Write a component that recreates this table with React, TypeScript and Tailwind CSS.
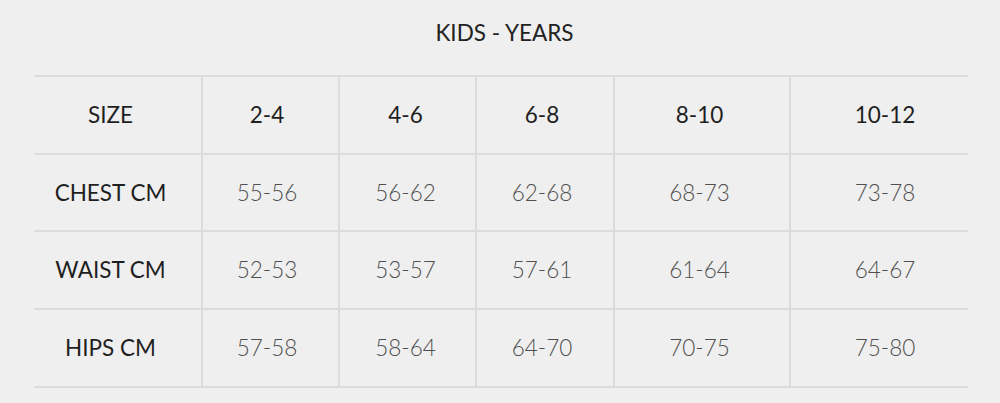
const headers = ["2-4", "4-6", "6-8", "8-10", "10-12"];

const rows = [
    { label: "CHEST CM", values: ["55-56", "56-62", "62-68", "68-73", "73-78"], h: "h-[77px]" },
    { label: "WAIST CM", values: ["52-53", "53-57", "57-61", "61-64", "64-67"], h: "h-[78px]" },
    { label: "HIPS CM", values: ["57-58", "58-64", "64-70", "70-75", "75-80"], h: "h-[78px]" },
];

const cols = "grid grid-cols-[167px_137px_137px_138px_176px_179px]";

// the source table centers its text a few px off per column
const nudge = ["pr-[7px]", "pr-[4px]", "pr-[6px]", "pr-[5px]", "pl-[11px]"];

const App = () => {
    return (
        <div
            className="w-[1000px] h-[403px] bg-[#efefef] pl-[34px]"
            style={{ fontFamily: "Lato, 'Liberation Sans', sans-serif" }}
        >
            <div className="w-[934px]">
                <div className="h-[75px] flex items-center justify-center pb-[10px] pl-[7px] text-[22.5px] text-[#222]">
                    KIDS - YEARS
                </div>
                <div className="border-t-2 border-[#dcdcdc]">
                    <div className={`${cols} h-[78px] border-b-2 border-[#dcdcdc] text-[22.5px] text-[#1f1f1f]`}>
                        <div className="flex items-center justify-center pr-[14px]">SIZE</div>
                        {headers.map((h, i) => (
                            <div key={h} className={`flex items-center justify-center border-l-2 border-[#dcdcdc] ${nudge[i]}`}>
                                {h}
                            </div>
                        ))}
                    </div>
                    {rows.map((r) => (
                        <div key={r.label} className={`${cols} ${r.h} border-b-2 border-[#dcdcdc] text-[22.5px]`}>
                            <div className="flex items-center justify-center pr-[14px] text-[#1f1f1f]">{r.label}</div>
                            {r.values.map((v, i) => (
                                <div
                                    key={i}
                                    className={`flex items-center justify-center border-l-2 border-[#dcdcdc] text-[#505050] font-light ${nudge[i]}`}
                                >
                                    {v}
                                </div>
                            ))}
                        </div>
                    ))}
                </div>
            </div>
        </div>
    );
};

export default App;
